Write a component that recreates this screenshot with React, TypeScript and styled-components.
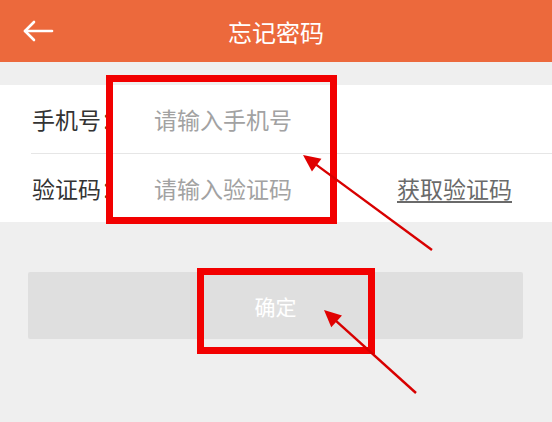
import React from 'react';
import styled, { createGlobalStyle } from 'styled-components';

const GlobalStyle = createGlobalStyle`
  html, body {
    margin: 0;
    padding: 0;
    background: #efefef;
  }
  body {
    font-family: "Noto Sans CJK SC", "Noto Sans", sans-serif;
  }
`;

const Page = styled.div`
  position: relative;
  min-height: 422px;
  background: #efefef;
  overflow: hidden;
`;

const Header = styled.header`
  height: 62px;
  background: #ec693c;
  display: grid;
  grid-template-columns: 1fr auto 1fr;
  align-items: center;
`;

const BackButton = styled.button`
  border: none;
  background: transparent;
  padding: 0 0 0 22px;
  display: flex;
  align-items: center;
  justify-self: start;
  cursor: pointer;
`;

const Title = styled.h1`
  margin: 0;
  font-size: 24px;
  font-weight: 400;
  color: #ffffff;
  letter-spacing: 0;
`;

const Form = styled.div`
  margin-top: 23px;
  background: #ffffff;
`;

const Row = styled.div`
  height: 68px;
  display: flex;
  align-items: center;
  padding: 0 40px 0 32px;
`;

const Divider = styled.div`
  height: 1px;
  margin-left: 31px;
  background: #e6e6e6;
`;

const Label = styled.span`
  width: 122px;
  flex-shrink: 0;
  font-size: 23px;
  color: #333333;
`;

const Field = styled.input`
  flex: 1;
  min-width: 0;
  border: none;
  outline: none;
  background: transparent;
  padding: 0;
  font-family: "Noto Sans CJK SC", "Noto Sans", sans-serif;
  font-size: 23px;
  color: #333333;
  &::placeholder {
    color: #a2a2a2;
  }
`;

const CodeLink = styled.a`
  font-size: 23px;
  color: #6a6a6a;
  text-decoration: underline;
  text-underline-offset: 3px;
  cursor: pointer;
`;

const Submit = styled.button`
  display: block;
  margin: 50px 29px 0 28px;
  width: calc(100% - 57px);
  height: 67px;
  border: none;
  border-radius: 2px;
  background: #dfdfdf;
  color: #ffffff;
  font-family: "Noto Sans CJK SC", "Noto Sans", sans-serif;
  font-size: 21px;
`;

// red annotation boxes drawn on top of the screenshot
const Mark = styled.div<{ $x: number; $y: number; $w: number; $h: number }>`
  position: absolute;
  left: ${p => p.$x}px;
  top: ${p => p.$y}px;
  width: ${p => p.$w}px;
  height: ${p => p.$h}px;
  box-sizing: border-box;
  border: 7px solid #f20000;
  pointer-events: none;
`;

const ArrowLayer = styled.svg`
  position: absolute;
  left: 0;
  top: 0;
  width: 552px;
  height: 422px;
  pointer-events: none;
`;

const arrowHead = (x1: number, y1: number, x2: number, y2: number) => {
  const dx = x2 - x1;
  const dy = y2 - y1;
  const len = Math.hypot(dx, dy);
  const ux = dx / len;
  const uy = dy / len;
  const bx = x2 - ux * 17;
  const by = y2 - uy * 17;
  const w = 8;
  return `${x2},${y2} ${bx - uy * w},${by + ux * w} ${bx + uy * w},${by - ux * w}`;
};

const Arrow = ({ from, to }: { from: [number, number]; to: [number, number] }) => {
  const len = Math.hypot(to[0] - from[0], to[1] - from[1]);
  const ex = to[0] - ((to[0] - from[0]) / len) * 12;
  const ey = to[1] - ((to[1] - from[1]) / len) * 12;
  return (
    <g fill="#e00000" stroke="#d80000">
      <line x1={from[0]} y1={from[1]} x2={ex} y2={ey} strokeWidth="2.4" />
      <polygon points={arrowHead(from[0], from[1], to[0], to[1])} stroke="none" />
    </g>
  );
};

const BackIcon = () => (
  <svg width="32" height="24" viewBox="0 0 32 24" fill="none" stroke="#fff" strokeWidth="2.6" strokeLinecap="round" strokeLinejoin="round">
    <path d="M3 12 H30" />
    <path d="M12 3 L3 12 L12 21" />
  </svg>
);

const App = () => {
  return (
    <Page>
      <GlobalStyle />
      <Header>
        <BackButton aria-label="返回"><BackIcon /></BackButton>
        <Title>忘记密码</Title>
        <span />
      </Header>

      <Form>
        <Row>
          <Label>手机号：</Label>
          <Field type="tel" placeholder="请输入手机号" />
        </Row>
        <Divider />
        <Row>
          <Label>验证码：</Label>
          <Field type="text" placeholder="请输入验证码" />
          <CodeLink>获取验证码</CodeLink>
        </Row>
      </Form>

      <Submit>确定</Submit>

      <Mark $x={106} $y={75} $w={231} $h={149} />
      <Mark $x={197} $y={268} $w={178} $h={86} />
      <ArrowLayer viewBox="0 0 552 422">
        <Arrow from={[432, 250]} to={[303, 155]} />
        <Arrow from={[416, 393]} to={[324, 310]} />
      </ArrowLayer>
    </Page>
  );
};

export default App;
